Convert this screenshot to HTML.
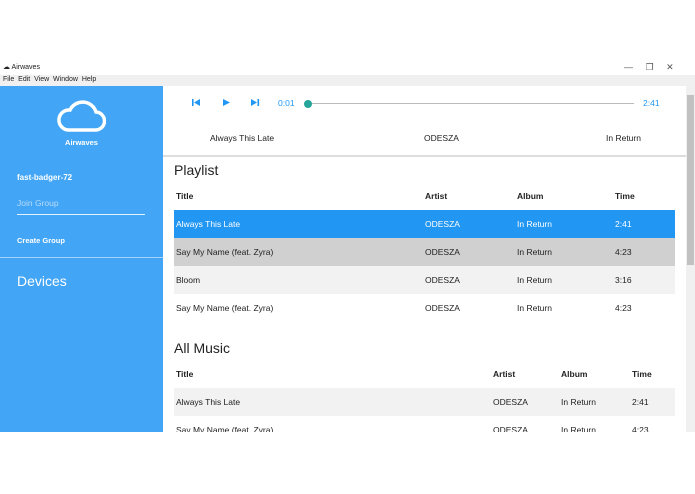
<!DOCTYPE html><html><head><style>
*{margin:0;padding:0;box-sizing:border-box}
body{width:695px;height:494px;background:#fff;font-family:"Liberation Sans",sans-serif;position:relative;overflow:hidden;font-size:8px;color:#222}
.a{position:absolute;white-space:nowrap}
.row{position:absolute;left:174px;width:501px;height:28px;font-size:8.5px}
.row span{position:absolute;top:9px}
.h span{font-weight:bold}
</style></head><body>
<div class="a" style="top:63px;left:3px;font-size:7px">☁ Airwaves</div>
<div class="a" style="top:62px;left:624px;font-size:9px;color:#555">—&nbsp;&nbsp;&nbsp;&nbsp;&nbsp;❐&nbsp;&nbsp;&nbsp;&nbsp;&nbsp;✕</div>
<div class="a" style="top:75px;left:0;width:695px;height:11px;background:#f0f0f0;font-size:7px;padding:1px 3px">File&nbsp;&nbsp;Edit&nbsp;&nbsp;View&nbsp;&nbsp;Window&nbsp;&nbsp;Help</div>
<div class="a" style="top:86px;left:0;width:163px;height:346px;background:#42a5f5;color:#fff">
 <svg class="a" style="left:56px;top:13px" width="50" height="34" viewBox="0 0 50 34"><path d="M12 31 H39 A9 9 0 0 0 40 13 A14 14 0 0 0 14 11 A10 10 0 0 0 12 31Z" fill="none" stroke="#fff" stroke-width="3.5"/></svg>
 <div class="a" style="left:0;width:163px;text-align:center;top:52px;font-weight:bold;font-size:7.5px">Airwaves</div>
 <div class="a" style="left:17px;top:87px;font-weight:bold;font-size:8px">fast-badger-72</div>
 <div class="a" style="left:17px;top:112px;font-size:8.5px;color:#b9dcfb">Join Group</div>
 <div class="a" style="left:17px;top:128px;width:128px;height:1px;background:#e3f1fd"></div>
 <div class="a" style="left:17px;top:150px;font-weight:bold;font-size:7.5px">Create Group</div>
 <div class="a" style="left:0;top:171px;width:163px;height:1px;background:#a6d2fa"></div>
 <div class="a" style="left:17px;top:187px;font-size:14px">Devices</div>
</div>
<div class="a" style="left:686px;top:86px;width:9px;height:346px;background:#f0f0f0"><div class="a" style="left:1px;top:9px;width:7px;height:170px;background:#c1c1c1"></div></div>
<svg class="a" style="left:192px;top:98px" width="80" height="10"><rect x="0" y="1" width="1.6" height="7" fill="#2196f3"/><path d="M8 1 L2 4.5 L8 8Z" fill="#2196f3"/><path d="M31 1 L38 4.5 L31 8Z" fill="#2196f3"/><path d="M59 1 L65 4.5 L59 8Z" fill="#2196f3"/><rect x="65.5" y="1" width="1.6" height="7" fill="#2196f3"/></svg>
<div class="a" style="left:278px;top:98px;color:#2196f3;font-size:8.5px">0:01</div>
<div class="a" style="left:307px;top:103px;width:327px;height:1px;background:#bbb"></div>
<div class="a" style="left:304px;top:100px;width:8px;height:8px;border-radius:50%;background:#26a69a"></div>
<div class="a" style="left:643px;top:98px;color:#2196f3;font-size:8.5px">2:41</div>
<div class="a" style="left:210px;top:133px;font-size:8.5px">Always This Late</div>
<div class="a" style="left:424px;top:133px;font-size:8.5px">ODESZA</div>
<div class="a" style="left:606px;top:133px;font-size:8.5px">In Return</div>
<div class="a" style="left:163px;top:155px;width:523px;height:2px;background:#ddd"></div>
<div class="a" style="left:174px;top:162px;font-size:14px">Playlist</div>
<div class="row h" style="top:182px"><span style="left:2px">Title</span><span style="left:251px">Artist</span><span style="left:343px">Album</span><span style="left:441px">Time</span></div>
<div class="row" style="top:210px;background:#2196f3;color:#fff"><span style="left:2px">Always This Late</span><span style="left:251px">ODESZA</span><span style="left:343px">In Return</span><span style="left:441px">2:41</span></div>
<div class="row" style="top:238px;background:#d0d0d0"><span style="left:2px">Say My Name (feat. Zyra)</span><span style="left:251px">ODESZA</span><span style="left:343px">In Return</span><span style="left:441px">4:23</span></div>
<div class="row" style="top:266px;background:#f2f2f2"><span style="left:2px">Bloom</span><span style="left:251px">ODESZA</span><span style="left:343px">In Return</span><span style="left:441px">3:16</span></div>
<div class="row" style="top:294px"><span style="left:2px">Say My Name (feat. Zyra)</span><span style="left:251px">ODESZA</span><span style="left:343px">In Return</span><span style="left:441px">4:23</span></div>
<div class="a" style="left:174px;top:340px;font-size:14px">All Music</div>
<div class="row h" style="top:360px"><span style="left:2px">Title</span><span style="left:319px">Artist</span><span style="left:387px">Album</span><span style="left:458px">Time</span></div>
<div class="row" style="top:388px;background:#f2f2f2"><span style="left:2px">Always This Late</span><span style="left:319px">ODESZA</span><span style="left:387px">In Return</span><span style="left:458px">2:41</span></div>
<div class="a" style="left:163px;top:416px;width:523px;height:16px;overflow:hidden"><div class="row" style="top:0;left:11px"><span style="left:2px">Say My Name (feat. Zyra)</span><span style="left:319px">ODESZA</span><span style="left:387px">In Return</span><span style="left:458px">4:23</span></div></div>
</body></html>
